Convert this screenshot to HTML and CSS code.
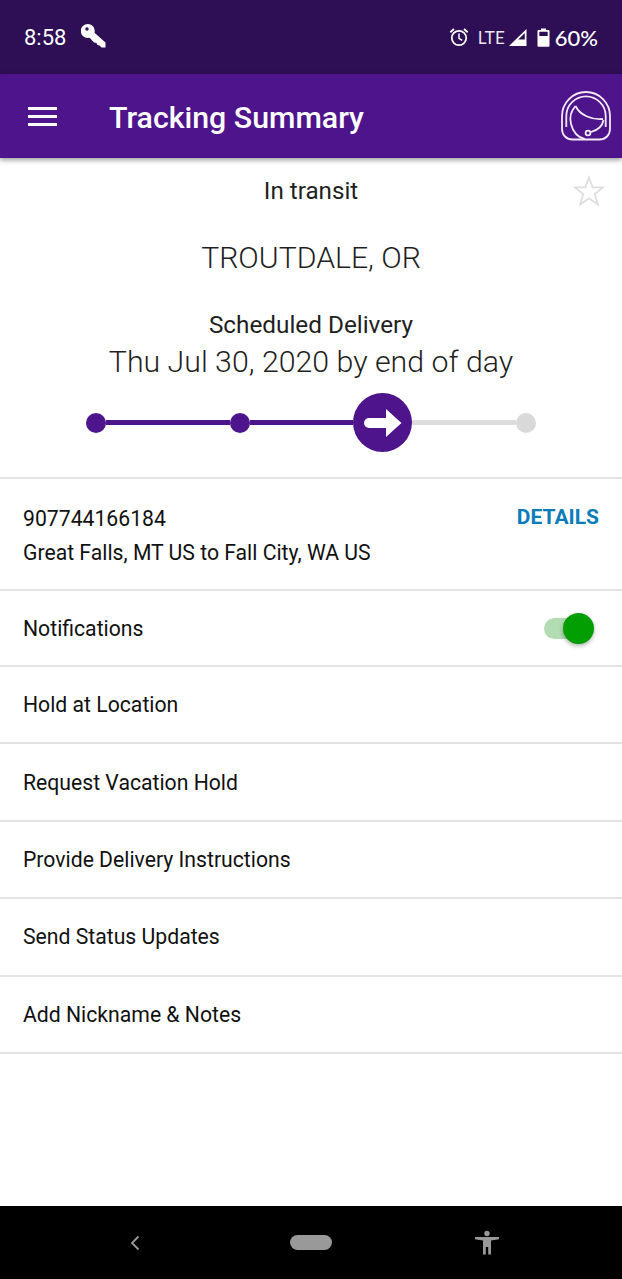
FILE: index.html
```html
<!DOCTYPE html>
<html lang="en">
<head>
  <meta charset="UTF-8" />
  <meta name="viewport" content="width=device-width, initial-scale=1" />
  <title>Tracking Summary</title>
  <link rel="stylesheet" href="styles.css">
</head>
<body>
  <div class="phone">
    <!-- Status bar -->
    <div class="status-bar">
      <div class="status-left">
        <span class="clock">8:58</span>
        <svg class="key-icon" width="26" height="26" viewBox="0 0 26 26">
          <path d="M6.800 1 A7 7 0 1 1 6.800 15 A7 7 0 1 1 6.800 1 Z M6 4.300 A1.700 1.700 0 1 0 6 7.700 A1.700 1.700 0 1 0 6 4.300 Z" fill="#fff" fill-rule="evenodd"/>
          <path d="M11.500 8 L24.500 19.500 L24.500 24.500 L20.500 24.500 L18.500 22.500 L16.500 22 L15.500 20 L13 19.500 L7.500 13.500 Z" fill="#fff"/>
        </svg>
      </div>
      <div class="status-right">
        <svg width="20" height="20" viewBox="0 0 20 20" fill="none" stroke="#fff">
          <circle cx="10" cy="11" r="7.200" stroke-width="1.700"/>
          <path d="M10 6.500 V11.300 L13.200 13.300" stroke-width="1.500"/>
          <path d="M1.300 5.200 L5 2 M18.700 5.200 L15 2" stroke-width="1.800"/>
        </svg>
        <span class="lte">LTE</span>
        <svg class="signal" width="20" height="19" viewBox="0 0 20 19">
          <path d="M18.500 1 V18 H1 Z M16.800 5 L10.300 11.500 H16.800 Z" fill="#fff" fill-rule="evenodd"/>
        </svg>
        <svg class="battery" width="13" height="19" viewBox="0 0 13 19">
          <path d="M4 0.500 H9 V2 H11.500 Q12.500 2 12.500 3 V17.800 Q12.500 18.800 11.500 18.800 H1.500 Q0.500 18.800 0.500 17.800 V3 Q0.500 2 1.500 2 H4 Z M2.300 3.800 V8 H10.700 V3.800 Z" fill="#fff" fill-rule="evenodd"/>
        </svg>
        <span class="percent">60%</span>
      </div>
    </div>

    <!-- App bar -->
    <header class="app-bar">
      <div class="menu-icon"><span></span><span></span><span></span></div>
      <h1>Tracking Summary</h1>
      <svg class="agent-icon" width="50" height="50" viewBox="0 0 50 50" fill="none" stroke="#f3e9f7" stroke-width="1.800">
        <path d="M1 25 A24 24 0 0 1 49 25 V38 C49 44 44.500 48.500 38.500 48.500 H11.500 C5.500 48.500 1 44 1 38 Z"/>
        <path d="M5.300 36 V25 A19.700 19.700 0 0 1 44.700 25 V36"/>
        <path d="M14.500 15 C10 20 8.500 27 10 33 C12 41 17 46.500 24 48.200"/>
        <path d="M14.500 15 C19 24 30 29 42 28"/>
        <path d="M42.500 29 C41.500 35 37 39 30 41"/>
        <circle cx="27" cy="42" r="2.400"/>
      </svg>
    </header>

    <main class="content">
      <!-- Tracking status -->
      <section class="summary">
        <div class="status-line">
          <span>In transit</span>
          <svg class="star" width="34" height="34" viewBox="0 0 34 34">
            <path d="M17 3.500 L20.600 13.400 L31 13.400 L22.800 20 L25.800 30.500 L17 24.300 L8.200 30.500 L11.200 20 L3 13.400 L13.400 13.400 Z" fill="none" stroke="#dedede" stroke-width="1.800"/>
          </svg>
        </div>
        <div class="location">TROUTDALE, OR</div>
        <div class="delivery-label">Scheduled Delivery</div>
        <div class="delivery-date">Thu Jul 30, 2020 by end of day</div>
        <div class="progress">
          <span class="dot"></span>
          <span class="seg seg-first"></span>
          <span class="dot"></span>
          <span class="seg"></span>
          <span class="current">
            <svg width="38" height="30" viewBox="0 0 38 30">
              <path d="M5 10 H22 V1 L37.500 15 L22 29 V20 H5 A5 5 0 0 1 5 10 Z" fill="#fff"/>
            </svg>
          </span>
          <span class="seg seg-todo"></span>
          <span class="dot dot-todo"></span>
        </div>
      </section>

      <!-- Shipment row -->
      <section class="row shipment">
        <div>
          <div class="tracking-no">907744166184</div>
          <div class="route">Great Falls, MT US to Fall City, WA US</div>
        </div>
        <a class="details-link">DETAILS</a>
      </section>

      <section class="row row-notify">
        <span>Notifications</span>
        <span class="toggle"><span class="knob"></span></span>
      </section>
      <section class="row action">Hold at Location</section>
      <section class="row action">Request Vacation Hold</section>
      <section class="row action">Provide Delivery Instructions</section>
      <section class="row action">Send Status Updates</section>
      <section class="row action">Add Nickname &amp; Notes</section>
    </main>

    <!-- Navigation bar -->
    <div class="nav-bar">
      <svg width="12" height="18" viewBox="0 0 12 18" fill="none" stroke="#999" stroke-width="1.800">
        <path d="M9.500 2.500 L3 9 L9.500 15.500"/>
      </svg>
      <span class="home-pill"></span>
      <svg width="26" height="26" viewBox="0 0 26 26" fill="#999">
        <circle cx="13" cy="3.500" r="2.700"/>
        <path d="M1 7 H25 V9.300 L17 10.500 V24.500 H14.200 V17 H11.800 V24.500 H9 V10.500 L1 9.300 Z"/>
      </svg>
    </div>
  </div>
</body>
</html>
```
FILE: styles.css
```css
/* Base reset and typography */
html, body {
  margin: 0;
  padding: 0;
}
body {
  background: #fff;
  font-family: Roboto, 'Liberation Sans', sans-serif;
  color: #1f1f1f;
}
.phone {
  width: 622px;
  height: 1279px;
  display: flex;
  flex-direction: column;
  overflow: hidden;
}
/* Status bar */
.status-bar {
  height: 74px;
  flex: none;
  background: #2e0e55;
  color: #fff;
  display: flex;
  align-items: center;
  justify-content: space-between;
  padding: 0 24px 0 24px;
  box-sizing: border-box;
}
.status-left,
.status-right {
  display: flex;
  align-items: center;
}
.clock {
  font-size: 22px;
}
.key-icon {
  margin-left: 15px;
  margin-top: -2px;
}
.lte {
  font-family: Lato, sans-serif;
  font-size: 17px;
  margin-left: 9px;
  margin-right: 3px;
  opacity: .9;
}
.battery {
  margin-left: 9px;
}
.percent {
  font-family: Lato, sans-serif;
  font-size: 22px;
  font-weight: 500;
  margin-left: 5px;
}
/* App bar */
.app-bar {
  height: 84px;
  flex: none;
  background: #4d148c;
  color: #fff;
  display: flex;
  align-items: center;
  padding: 0 11px 0 28px;
  box-shadow: 0 2px 5px rgba(0, 0, 0, 0.4);
  position: relative;
}
.app-bar h1 {
  flex: 1;
  margin: 3px 0 0 52px;
  font-size: 30.300px;
  font-weight: 500;
}
.menu-icon {
  width: 29px;
  display: flex;
  flex-direction: column;
  gap: 5px;
}
.menu-icon span {
  height: 3px;
  background: #fff;
}
/* Summary block */
.content {
  flex: 1;
}
.summary {
  height: 319px;
  text-align: center;
  border-bottom: 2px solid #e3e3e3;
}
.status-line {
  position: relative;
  padding-top: 19px;
  font-size: 24.200px;
  line-height: 28px;
}
.star {
  position: absolute;
  right: 16px;
  top: 16px;
}
.location {
  font-size: 30.200px;
  font-weight: 300;
  line-height: 36px;
  margin-top: 35px;
}
.delivery-label {
  font-size: 24.300px;
  line-height: 28px;
  margin-top: 35px;
}
.delivery-date {
  font-size: 30.300px;
  font-weight: 300;
  line-height: 36px;
  margin-top: 5px;
}
/* Progress track */
.progress {
  display: flex;
  align-items: center;
  padding: 0 86.500px 0 86px;
  margin-top: 13px;
}
.dot {
  width: 20px;
  height: 20px;
  flex: none;
  border-radius: 50%;
  background: #4d148c;
}
.dot-todo {
  background: #d9d9d9;
}
.seg {
  flex: 1;
  height: 5px;
  background: #4d148c;
}
.seg-first {
  flex: none;
  width: 123.500px;
}
.seg-todo {
  background: #dcdcdc;
}
.current {
  width: 59px;
  height: 59px;
  flex: none;
  border-radius: 50%;
  background: #4d148c;
  display: flex;
  align-items: center;
  justify-content: center;
}
/* List rows */
.row {
  display: flex;
  align-items: center;
  justify-content: space-between;
  padding: 0 23px;
  border-bottom: 2px solid #e3e3e3;
  font-size: 21.200px;
  color: #111;
}
.shipment {
  height: 110px;
  padding-right: 23px;
}
.tracking-no {
  line-height: 28px;
  margin-top: 3px;
  margin-bottom: 6px;
}
.route {
  line-height: 28px;
}
.details-link {
  align-self: flex-start;
  margin-top: 25px;
  font-size: 21px;
  line-height: 26px;
  font-weight: 700;
  color: #0a7cb8;
}
.row-notify {
  height: 74px;
  padding-right: 28px;
}
.action {
  height: 75.400px;
}
/* Switch */
.toggle {
  width: 50px;
  height: 21px;
  border-radius: 11px;
  background: #b2dcb2;
  display: flex;
  align-items: center;
  justify-content: flex-end;
}
.knob {
  width: 31px;
  height: 31px;
  border-radius: 50%;
  background: #029e02;
  box-shadow: 0 2px 4px rgba(0, 0, 0, 0.3);
}
/* Navigation bar */
.nav-bar {
  height: 73px;
  flex: none;
  background: #000;
  display: flex;
  align-items: center;
  justify-content: space-between;
  padding: 0 122px 0 129px;
}
.home-pill {
  width: 42px;
  height: 15px;
  margin-left: 6px;
  border-radius: 8px;
  background: #999;
}
```
